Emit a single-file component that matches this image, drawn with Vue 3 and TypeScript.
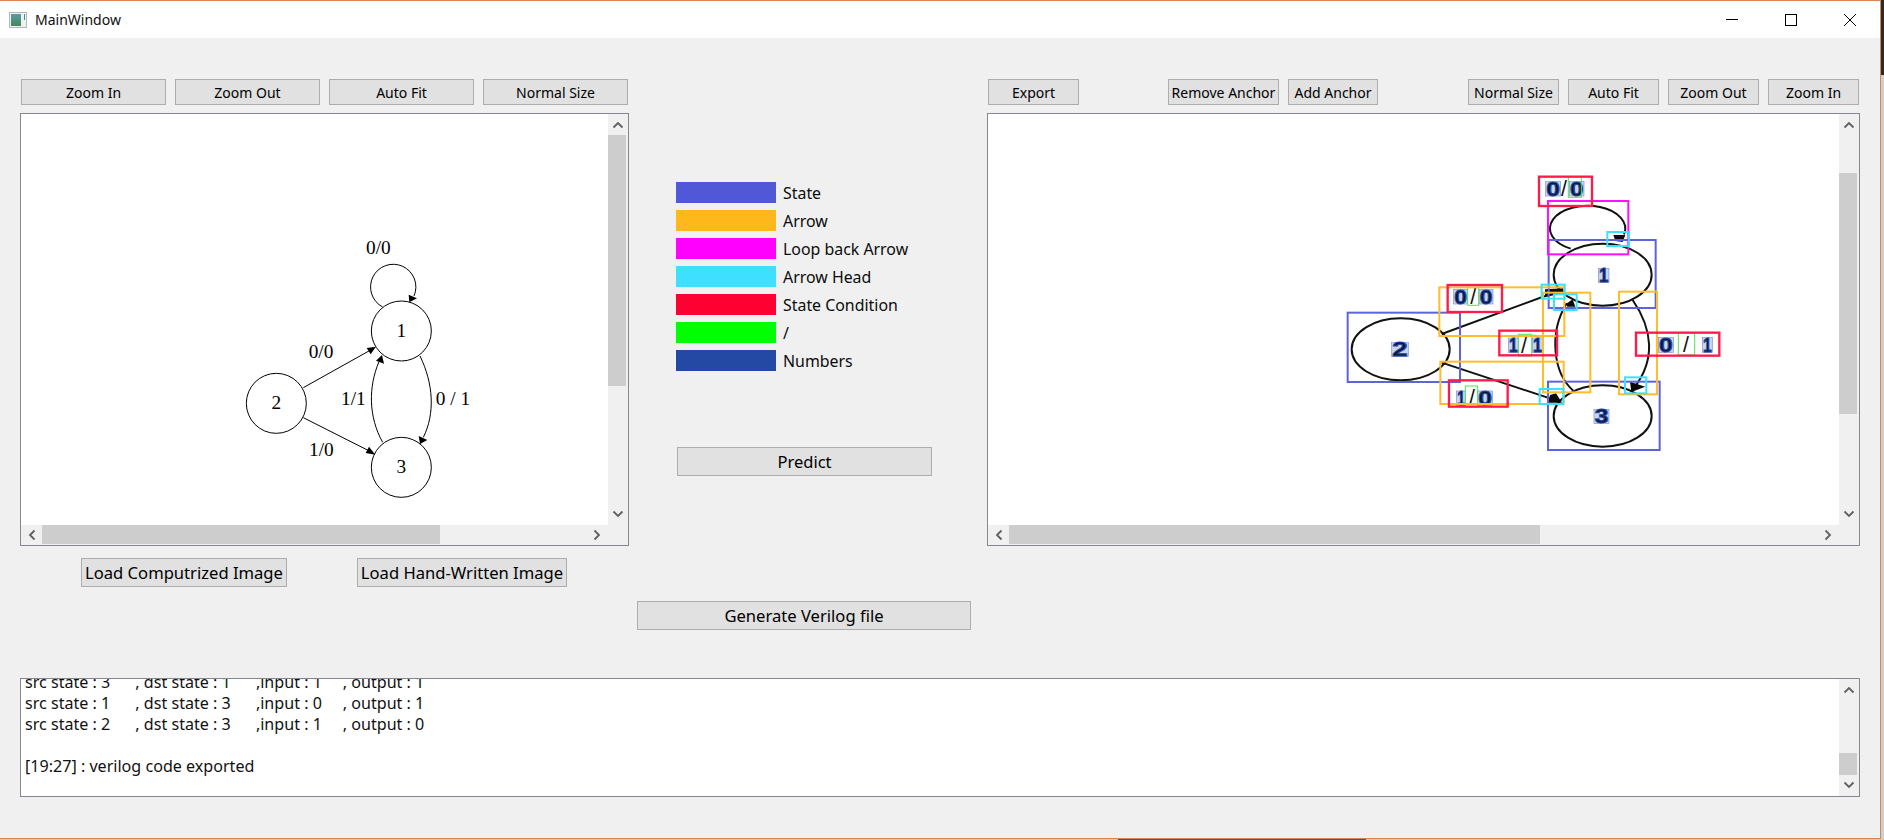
<script setup lang="ts">
interface Box { x1: number; y1: number; x2: number; y2: number }
interface Digit extends Box { t: string }
interface Thumb { start: number; size: number }

const leftButtons: string[] = ['Zoom In', 'Zoom Out', 'Auto Fit', 'Normal Size']
const legend: { label: string; color: string }[] = [
  { label: 'State', color: '#5058d8' },
  { label: 'Arrow', color: '#ffb81c' },
  { label: 'Loop back Arrow', color: '#ff00ff' },
  { label: 'Arrow Head', color: '#3de0ff' },
  { label: 'State Condition', color: '#ff0033' },
  { label: '/', color: '#00ff00' },
  { label: 'Numbers', color: '#2349a4' },
]
const logLines: string[] = [
  'src state : 3      , dst state : 1      ,input : 1     , output : 1',
  'src state : 1      , dst state : 3      ,input : 0     , output : 1',
  'src state : 2      , dst state : 3      ,input : 1     , output : 0',
  '',
  '[19:27] : verilog code exported',
]

const leftV: Thumb = { start: 21, size: 251 }
const leftH: Thumb = { start: 21, size: 398 }
const rightV: Thumb = { start: 59, size: 241 }
const rightH: Thumb = { start: 21, size: 531 }
const logV: Thumb = { start: 74, size: 22 }

const stateBoxes: Box[] = [
  { x1: 143, y1: 458, x2: 480, y2: 666 },
  { x1: 746, y1: 240, x2: 1067, y2: 444 },
  { x1: 744, y1: 665, x2: 1079, y2: 870 },
]
const arrowBoxes: Box[] = [
  { x1: 418, y1: 382, x2: 793, y2: 528 },
  { x1: 421, y1: 605, x2: 791, y2: 732 },
  { x1: 729, y1: 398, x2: 871, y2: 697 },
  { x1: 957, y1: 395, x2: 1071, y2: 703 },
]
const headBoxes: Box[] = [
  { x1: 725, y1: 374, x2: 794, y2: 416 },
  { x1: 762, y1: 403, x2: 830, y2: 450 },
  { x1: 922, y1: 216, x2: 987, y2: 258 },
  { x1: 975, y1: 652, x2: 1039, y2: 700 },
  { x1: 719, y1: 687, x2: 790, y2: 732 },
]
const condBoxes: Box[] = [
  { x1: 717, y1: 50, x2: 876, y2: 138 },
  { x1: 443, y1: 375, x2: 606, y2: 456 },
  { x1: 598, y1: 512, x2: 771, y2: 586 },
  { x1: 1008, y1: 518, x2: 1258, y2: 587 },
  { x1: 447, y1: 661, x2: 623, y2: 740 },
]
const slashBoxes: Box[] = [
  { x1: 805, y1: 50, x2: 844, y2: 112 },
  { x1: 503, y1: 375, x2: 536, y2: 436 },
  { x1: 655, y1: 523, x2: 695, y2: 588 },
  { x1: 1135, y1: 518, x2: 1184, y2: 585 },
  { x1: 496, y1: 678, x2: 533, y2: 741 },
]
const digits: Digit[] = [
  { t: '0', x1: 737, y1: 65, x2: 782, y2: 108 },
  { t: '0', x1: 808, y1: 65, x2: 852, y2: 108 },
  { t: '0', x1: 461, y1: 388, x2: 503, y2: 432 },
  { t: '0', x1: 537, y1: 388, x2: 579, y2: 432 },
  { t: '1', x1: 625, y1: 534, x2: 655, y2: 578 },
  { t: '1', x1: 697, y1: 534, x2: 728, y2: 578 },
  { t: '0', x1: 1075, y1: 533, x2: 1120, y2: 577 },
  { t: '1', x1: 1207, y1: 533, x2: 1237, y2: 577 },
  { t: '1', x1: 470, y1: 693, x2: 497, y2: 737 },
  { t: '0', x1: 533, y1: 693, x2: 578, y2: 737 },
  { t: '1', x1: 895, y1: 325, x2: 927, y2: 367 },
  { t: '2', x1: 275, y1: 548, x2: 325, y2: 590 },
  { t: '3', x1: 882, y1: 748, x2: 927, y2: 790 },
]
const slashes: { x: number; y: number }[] = [
  { x: 792, y: 108 },
  { x: 520, y: 432 },
  { x: 672, y: 578 },
  { x: 1158, y: 576 },
  { x: 516, y: 734 },
]
</script>

<template>
  <div class="desktop">
    <div class="side-strip"></div>
    <div class="window">
      <header class="titlebar">
        <svg class="app-icon" width="18" height="16" viewBox="0 0 18 16">
          <defs>
            <linearGradient id="appg" x1="0" y1="0" x2="0" y2="1">
              <stop offset="0" stop-color="#5f9aa8" />
              <stop offset="1" stop-color="#3d8a5a" />
            </linearGradient>
          </defs>
          <rect x="0.5" y="0.5" width="17" height="15" fill="#eef0f2" stroke="#b4b8bc" />
          <rect x="2" y="2" width="10" height="12" fill="url(#appg)" />
          <rect x="15" y="2" width="1" height="6" fill="#4a8a98" />
        </svg>
        <span class="title">MainWindow</span>
        <div class="controls">
          <svg width="14" height="14" viewBox="0 0 14 14"><path d="M1 6.5H13" class="ctl" /></svg>
          <svg width="14" height="14" viewBox="0 0 14 14"><rect x="1.5" y="1.5" width="11" height="11" class="ctl" /></svg>
          <svg width="14" height="14" viewBox="0 0 14 14"><path d="M1 1L13 13M13 1L1 13" class="ctl" /></svg>
        </div>
      </header>

      <main class="content">
        <section class="top">
          <div class="left-col">
            <div class="btn-row left-row">
              <button v-for="b in leftButtons" :key="b" class="btn wide">{{ b }}</button>
            </div>
            <div class="panel image-panel">
              <div class="viewport">
                <svg class="canvas" width="587" height="411" viewBox="21 114 587 411">
                  <g transform="translate(200 210) scale(0.33333)" class="graph">
                    <circle cx="604" cy="363" r="90" />
                    <circle cx="229" cy="580" r="90" />
                    <circle cx="604" cy="772" r="90" />
                    <path d="M548 291A68 68 0 1 1 642 258" />
                    <path d="M310 533L512 420" />
                    <path d="M310 623L508 723" />
                    <path d="M660 438C700 520 706 610 670 682" />
                    <path d="M548 697C505 620 505 530 537 455" />
                    <polygon class="tip" points="651,265 626,254 628,277" />
                    <polygon class="tip" points="528,410 500,414 512,433" />
                    <polygon class="tip" points="526,734 507,710 497,729" />
                    <polygon class="tip" points="660,702 656,678 682,690" />
                    <polygon class="tip" points="546,435 528,452 552,461" />
                    <text class="serif" x="604" y="381">1</text>
                    <text class="serif" x="229" y="598">2</text>
                    <text class="serif" x="604" y="790">3</text>
                    <text class="serif" x="535" y="131">0/0</text>
                    <text class="serif" x="363" y="444">0/0</text>
                    <text class="serif" x="460" y="586">1/1</text>
                    <text class="serif" x="759" y="586">0 / 1</text>
                    <text class="serif" x="364" y="738">1/0</text>
                  </g>
                </svg>
              </div>
              <div class="vbar">
                <svg class="arrow" width="12" height="8" viewBox="0 0 12 8"><path d="M1.5 6.5L6 2L10.5 6.5" /></svg>
                <div class="vthumb" :style="{ top: leftV.start + 'px', height: leftV.size + 'px' }"></div>
                <svg class="arrow" width="12" height="8" viewBox="0 0 12 8"><path d="M1.5 1.5L6 6L10.5 1.5" /></svg>
              </div>
              <div class="hbar">
                <svg class="arrow" width="8" height="12" viewBox="0 0 8 12"><path d="M6.5 1.5L2 6L6.5 10.5" /></svg>
                <div class="hthumb" :style="{ left: leftH.start + 'px', width: leftH.size + 'px' }"></div>
                <svg class="arrow" width="8" height="12" viewBox="0 0 8 12"><path d="M1.5 1.5L6 6L1.5 10.5" /></svg>
              </div>
              <div class="corner"></div>
            </div>
            <div class="load-row">
              <button class="btn load-a">Load Computrized Image</button>
              <button class="btn load-b">Load Hand-Written Image</button>
            </div>
          </div>

          <div class="mid-col">
            <ul class="legend">
              <li v-for="l in legend" :key="l.label" class="legend-item">
                <span class="swatch" :style="{ background: l.color }"></span>
                <span>{{ l.label }}</span>
              </li>
            </ul>
            <button class="btn predict">Predict</button>
          </div>

          <div class="right-col">
            <div class="btn-row right-row">
              <button class="btn w90">Export</button>
              <button class="btn remove">Remove Anchor</button>
              <button class="btn w90 add">Add Anchor</button>
              <button class="btn w90 normal">Normal Size</button>
              <button class="btn w90 tail">Auto Fit</button>
              <button class="btn w90 tail">Zoom Out</button>
              <button class="btn w90 tail">Zoom In</button>
            </div>
            <div class="panel image-panel">
              <div class="viewport">
                <svg class="canvas" width="851" height="411" viewBox="988 114 851 411">
                  <g transform="translate(1300 160) scale(0.33333)">
                    <g class="sketch">
                      <ellipse cx="302" cy="568" rx="147" ry="93" />
                      <ellipse cx="908" cy="344" rx="147" ry="93" />
                      <ellipse cx="908" cy="768" rx="147" ry="92" />
                      <path d="M812 266A113 68 0 1 1 972 223" />
                      <path d="M425 522L735 408" />
                      <path d="M425 608L750 715" />
                      <path d="M820 692C760 640 745 520 800 430" />
                      <path d="M998 420C1060 510 1065 600 1005 680" />
                    </g>
                    <g class="blobs">
                      <polygon points="735,388 790,385 792,398 735,412" />
                      <polygon points="798,432 818,418 826,440 802,440" />
                      <polygon points="990,665 1036,680 994,696" />
                      <polygon points="750,705 768,700 786,728 745,728" />
                      <polygon points="940,225 976,225 968,246 946,243" />
                    </g>
                    <g>
                      <rect v-for="(d, i) in digits" :key="'d' + i" class="digit-box" :x="d.x1" :y="d.y1" :width="d.x2 - d.x1" :height="d.y2 - d.y1" />
                      <text
                        v-for="(d, i) in digits"
                        :key="'t' + i"
                        class="digit"
                        :x="d.x1 + 2"
                        :y="d.y2 - 1"
                        :textLength="d.x2 - d.x1 - 4"
                        lengthAdjust="spacingAndGlyphs"
                      >{{ d.t }}</text>
                      <text v-for="(s, i) in slashes" :key="'s' + i" class="slash" :x="s.x" :y="s.y">/</text>
                    </g>
                    <rect v-for="(b, i) in slashBoxes" :key="'sl' + i" class="box slash-box" :x="b.x1" :y="b.y1" :width="b.x2 - b.x1" :height="b.y2 - b.y1" />
                    <rect v-for="(b, i) in stateBoxes" :key="'st' + i" class="box state-box" :x="b.x1" :y="b.y1" :width="b.x2 - b.x1" :height="b.y2 - b.y1" />
                    <rect v-for="(b, i) in arrowBoxes" :key="'ar' + i" class="box arrow-box" :x="b.x1" :y="b.y1" :width="b.x2 - b.x1" :height="b.y2 - b.y1" />
                    <rect class="box loop-box" x="744" y="123" width="241" height="160" />
                    <rect v-for="(b, i) in condBoxes" :key="'co' + i" class="box cond-box" :x="b.x1" :y="b.y1" :width="b.x2 - b.x1" :height="b.y2 - b.y1" />
                    <rect v-for="(b, i) in headBoxes" :key="'he' + i" class="box head-box" :x="b.x1" :y="b.y1" :width="b.x2 - b.x1" :height="b.y2 - b.y1" />
                  </g>
                </svg>
              </div>
              <div class="vbar">
                <svg class="arrow" width="12" height="8" viewBox="0 0 12 8"><path d="M1.5 6.5L6 2L10.5 6.5" /></svg>
                <div class="vthumb" :style="{ top: rightV.start + 'px', height: rightV.size + 'px' }"></div>
                <svg class="arrow" width="12" height="8" viewBox="0 0 12 8"><path d="M1.5 1.5L6 6L10.5 1.5" /></svg>
              </div>
              <div class="hbar">
                <svg class="arrow" width="8" height="12" viewBox="0 0 8 12"><path d="M6.5 1.5L2 6L6.5 10.5" /></svg>
                <div class="hthumb" :style="{ left: rightH.start + 'px', width: rightH.size + 'px' }"></div>
                <svg class="arrow" width="8" height="12" viewBox="0 0 8 12"><path d="M1.5 1.5L6 6L1.5 10.5" /></svg>
              </div>
              <div class="corner"></div>
            </div>
          </div>
        </section>

        <button class="btn generate">Generate Verilog file</button>

        <section class="panel log-panel">
          <div class="log-text">
            <div class="log-inner">
              <div v-for="(line, i) in logLines" :key="i" class="log-line">{{ line }}</div>
            </div>
          </div>
          <div class="vbar">
            <svg class="arrow" width="12" height="8" viewBox="0 0 12 8"><path d="M1.5 6.5L6 2L10.5 6.5" /></svg>
            <div class="vthumb" :style="{ top: logV.start + 'px', height: logV.size + 'px' }"></div>
            <svg class="arrow" width="12" height="8" viewBox="0 0 12 8"><path d="M1.5 1.5L6 6L10.5 1.5" /></svg>
          </div>
        </section>
      </main>
    </div>
    <div class="taskbar"><span class="task-active"></span></div>
  </div>
</template>

<style scoped>
.desktop {
  position: relative;
  width: 1884px;
  height: 840px;
  overflow: hidden;
  background: #cfcfcf;
  font-family: "Noto Sans", "Liberation Sans", sans-serif;
  color: #000;
}
.side-strip {
  position: absolute;
  top: 0;
  right: 0;
  width: 3px;
  height: 75px;
  background: #2a2a2a;
}
.window {
  width: 1881px;
  height: 839px;
  box-sizing: border-box;
  border-top: 1px solid #d9854f;
  border-right: 1px solid #d9854f;
  border-bottom: 1px solid #d9854f;
  background: #f0f0f0;
  display: flex;
  flex-direction: column;
}
.titlebar {
  height: 37px;
  flex: none;
  background: #fff;
  display: flex;
  align-items: center;
  padding-left: 9px;
}
.app-icon { flex: none; }
.title {
  margin-left: 8px;
  font-size: 14px;
  color: #101010;
}
.controls {
  margin-left: auto;
  display: flex;
  align-items: center;
  gap: 45px;
  padding-right: 23px;
}
.ctl {
  fill: none;
  stroke: #000;
  stroke-width: 1;
}
.content {
  flex: 1;
  padding: 41px 0 0 20px;
  display: flex;
  flex-direction: column;
  align-items: flex-start;
}
.top {
  display: flex;
  align-items: flex-start;
}
.left-col { width: 609px; flex: none; }
.right-col { width: 873px; flex: none; margin-left: 46px; }
.mid-col {
  width: 312px;
  flex: none;
  padding: 103px 0 0 47px;
  box-sizing: border-box;
}
.btn {
  display: flex;
  align-items: center;
  justify-content: center;
  box-sizing: border-box;
  height: 26px;
  padding: 0;
  border: 1px solid #adadad;
  background: #e1e1e1;
  color: #000;
  font-family: inherit;
  font-size: 14px;
  white-space: nowrap;
}
.btn-row {
  display: flex;
  height: 26px;
  margin-bottom: 8px;
}
.left-row { padding-left: 1px; gap: 9px; }
.wide { width: 145px; }
.w90 { width: 91px; }
.right-row { padding-left: 1px; }
.remove { width: 111px; margin-left: 89px; }
.add { margin-left: 9px; width: 90px; }
.normal { margin-left: 90px; }
.tail { margin-left: 9px; }
.panel {
  box-sizing: border-box;
  border: 1px solid #828790;
  background: #fff;
}
.image-panel {
  height: 433px;
  display: grid;
  grid-template-columns: 1fr 20px;
  grid-template-rows: 411px 20px;
}
.viewport {
  overflow: hidden;
  background: #fff;
}
.canvas { display: block; }
.vbar {
  position: relative;
  background: #f0f0f0;
  display: flex;
  flex-direction: column;
  align-items: center;
  justify-content: space-between;
  padding: 7px 0;
  box-sizing: border-box;
}
.hbar {
  position: relative;
  background: #f0f0f0;
  display: flex;
  align-items: center;
  justify-content: space-between;
  padding: 0 7px;
  box-sizing: border-box;
}
.corner { background: #f0f0f0; }
.vthumb {
  position: absolute;
  left: 0;
  width: 18px;
  background: #cdcdcd;
}
.hthumb {
  position: absolute;
  top: 0;
  height: 19px;
  background: #cdcdcd;
}
.arrow {
  fill: none;
  stroke: #606060;
  stroke-width: 1.8;
  flex: none;
}
.load-row {
  display: flex;
  margin-top: 12px;
}
.load-a, .load-b {
  height: 29px;
  font-size: 16.6px;
}
.load-a { width: 206px; margin-left: 61px; }
.load-b { width: 210px; margin-left: 70px; }
.legend {
  list-style: none;
  margin: 0;
  padding: 0;
  display: flex;
  flex-direction: column;
  gap: 7px;
}
.legend-item {
  display: flex;
  align-items: center;
  gap: 7px;
  height: 21px;
  font-size: 15.9px;
  color: #0c0c0c;
}
.swatch {
  width: 100px;
  height: 21px;
  flex: none;
}
.predict {
  width: 255px;
  height: 29px;
  margin-top: 76px;
  margin-left: 1px;
  font-size: 16.5px;
}
.generate {
  width: 334px;
  height: 29px;
  margin-top: 14px;
  margin-left: 617px;
  font-size: 16.6px;
}
.log-panel {
  width: 1840px;
  height: 119px;
  margin-top: 48px;
  display: grid;
  grid-template-columns: 1fr 20px;
}
.log-text {
  overflow: hidden;
  height: 117px;
  padding-left: 4px;
  font-size: 16.1px;
}
.log-inner { margin-top: -7px; }
.log-line {
  height: 21px;
  line-height: 21px;
  white-space: pre;
  color: #111;
}
.log-panel .vbar { height: 117px; }
.graph circle, .graph path {
  fill: none;
  stroke: #000;
  stroke-width: 3;
}
.graph .tip { fill: #000; }
.serif {
  font-family: "Liberation Serif", serif;
  font-size: 58px;
  text-anchor: middle;
  fill: #000;
}
.sketch ellipse, .sketch path {
  fill: none;
  stroke: #111;
  stroke-width: 6;
}
.blobs polygon { fill: #0a0a0a; }
.box { fill: none; }
.state-box { stroke: #5d63dc; stroke-width: 6; }
.arrow-box { stroke: #ffbc2c; stroke-width: 6; }
.loop-box { stroke: #ff10ff; stroke-width: 6; }
.head-box { stroke: #3de0ff; stroke-width: 6; }
.cond-box { stroke: #ff1a4a; stroke-width: 7; }
.slash-box { stroke: #55e455; stroke-width: 3; }
.digit-box { fill: #c9d4ee; stroke: #7f93cc; stroke-width: 2; }
.digit {
  font-family: "Liberation Sans", sans-serif;
  font-weight: 700;
  font-size: 60px;
  fill: #0b1436;
  stroke: #2349a4;
  stroke-width: 3;
}
.slash {
  font-family: "Liberation Sans", sans-serif;
  font-size: 64px;
  text-anchor: middle;
  fill: #111;
}
.taskbar {
  height: 1px;
  position: relative;
  background: #cfc7bd;
}
.task-active {
  position: absolute;
  left: 1118px;
  width: 248px;
  height: 1px;
  background: #1a5fb0;
}
</style>
